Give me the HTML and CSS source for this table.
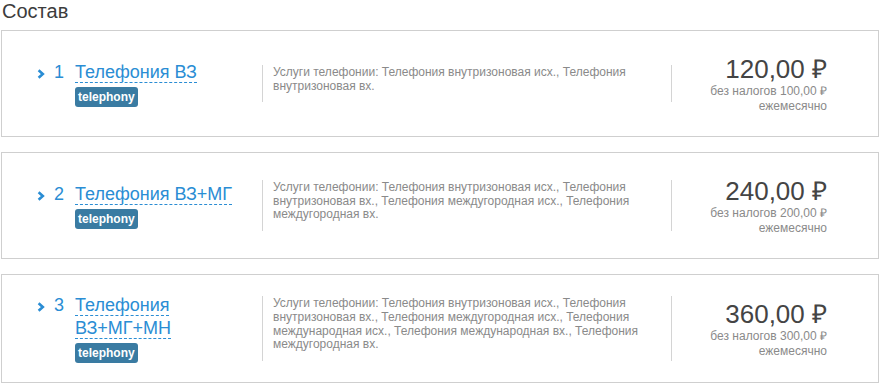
FILE: index.html
```html
<!DOCTYPE html>
<html lang="ru">
<head>
<meta charset="utf-8">
<title>Состав</title>
<link rel="stylesheet" href="styles.css">
</head>
<body>
<div class="page">
  <h2 class="heading">Состав</h2>

  <div class="card">
    <div class="name-col">
      <svg class="chevron" width="8" height="10" viewBox="0 0 8 10"><path d="M1.6 1.3 L5.8 5 L1.6 8.7" fill="none" stroke="#2a8dd4" stroke-width="2.6"/></svg>
      <span class="num">1</span>
      <div class="title-wrap">
        <div class="title"><a class="title-link">Телефония ВЗ</a></div>
        <span class="badge">telephony</span>
      </div>
    </div>
    <div class="desc">Услуги телефонии: Телефония внутризоновая исх., Телефония внутризоновая вх.</div>
    <div class="price-col">
      <div class="price">120,00 ₽</div>
      <div class="sub">без налогов 100,00 ₽</div>
      <div class="sub">ежемесячно</div>
    </div>
  </div>

  <div class="card">
    <div class="name-col">
      <svg class="chevron" width="8" height="10" viewBox="0 0 8 10"><path d="M1.6 1.3 L5.8 5 L1.6 8.7" fill="none" stroke="#2a8dd4" stroke-width="2.6"/></svg>
      <span class="num">2</span>
      <div class="title-wrap">
        <div class="title"><a class="title-link">Телефония ВЗ+МГ</a></div>
        <span class="badge">telephony</span>
      </div>
    </div>
    <div class="desc">Услуги телефонии: Телефония внутризоновая исх., Телефония внутризоновая вх., Телефония междугородная исх., Телефония междугородная вх.</div>
    <div class="price-col">
      <div class="price">240,00 ₽</div>
      <div class="sub">без налогов 200,00 ₽</div>
      <div class="sub">ежемесячно</div>
    </div>
  </div>

  <div class="card">
    <div class="name-col">
      <svg class="chevron" width="8" height="10" viewBox="0 0 8 10"><path d="M1.6 1.3 L5.8 5 L1.6 8.7" fill="none" stroke="#2a8dd4" stroke-width="2.6"/></svg>
      <span class="num">3</span>
      <div class="title-wrap">
        <div class="title"><a class="title-link">Телефония ВЗ+МГ+МН</a></div>
        <span class="badge">telephony</span>
      </div>
    </div>
    <div class="desc">Услуги телефонии: Телефония внутризоновая исх., Телефония внутризоновая вх., Телефония междугородная исх., Телефония международная исх., Телефония международная вх., Телефония междугородная вх.</div>
    <div class="price-col">
      <div class="price">360,00 ₽</div>
      <div class="sub">без налогов 300,00 ₽</div>
      <div class="sub">ежемесячно</div>
    </div>
  </div>
</div>
</body>
</html>
```
FILE: styles.css
```css
* { box-sizing: border-box; }
html, body { margin: 0; padding: 0; background: #fff; }
body {
  font-family: "Liberation Sans", Arial, Helvetica, sans-serif;
  color: #444;
}
.page {
  padding: 0 2px 0 1px;
}
.heading {
  margin: 0 0 8px 1px;
  font-size: 20px;
  line-height: 22px;
  font-weight: normal;
  color: #3c3c3c;
}
.card {
  display: grid;
  grid-template-columns: 225px 410px 1fr;
  align-items: center;
  border: 1px solid #cfcfcf;
  padding: 19px 51px 19px 35px;
  min-height: 107px;
  margin-bottom: 15px;
}
.name-col {
  display: flex;
  align-items: flex-start;
}
.chevron {
  flex: none;
  margin-top: 8px;
  margin-right: 9px;
}
.num {
  flex: none;
  width: 10px;
  margin-right: 11px;
  font-size: 18px;
  line-height: 23px;
  color: #2a8dd4;
}
.title-wrap {
  display: flex;
  flex-direction: column;
  align-items: flex-start;
  max-width: 180px;
}
.title {
  font-size: 18px;
  line-height: 23px;
}
.title-link {
  color: #2a8dd4;
  border-bottom: 1px dashed #2a8dd4;
  text-decoration: none;
}
.badge {
  margin-top: 3px;
  display: inline-block;
  height: 20px;
  line-height: 20px;
  padding: 0 3px;
  border-radius: 3px;
  background: #3a7ba2;
  color: #fff;
  font-size: 12px;
  font-weight: bold;
}
.desc {
  border-left: 1px solid #d4d4d4;
  border-right: 1px solid #d4d4d4;
  padding: 1px 30px 9px 10px;
  font-size: 12px;
  line-height: 13.8px;
  color: #8a8a8a;
}
.price-col {
  text-align: right;
}
.price {
  font-size: 26px;
  line-height: 30px;
  color: #444;
}
.sub {
  font-size: 12px;
  line-height: 15px;
  color: #8a8a8a;
}
```
